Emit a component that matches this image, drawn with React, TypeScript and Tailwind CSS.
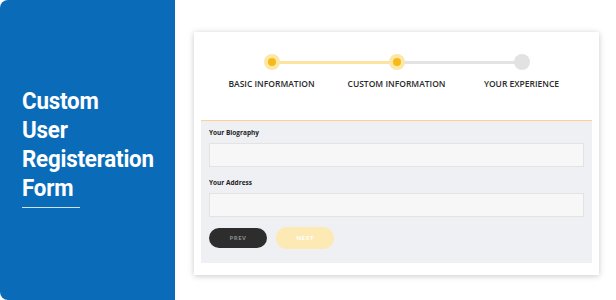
import React from "react";

export default function App() {
  const steps = [
    { label: "BASIC INFORMATION", state: "done" },
    { label: "CUSTOM INFORMATION", state: "done" },
    { label: "YOUR EXPERIENCE", state: "todo" },
  ];
  return (
    <div className="w-[616px] h-[300px] bg-white flex overflow-hidden">
      <div className="w-[175px] h-full bg-[#0a6cb9] rounded-l-[8px] flex flex-col justify-center pl-[22px] pb-[6px]">
        <div
          className="text-white font-bold text-[23px] leading-[29px] tracking-[-0.2px]"
          style={{ fontFamily: "Roboto, 'Liberation Sans', sans-serif", transform: "scaleX(0.97)", transformOrigin: "left" }}
        >
          <div>Custom</div>
          <div>User</div>
          <div>Registeration</div>
          <div>Form</div>
        </div>
        <div className="w-[58px] h-px bg-white/80 mt-[4px]" />
      </div>
      <div className="flex-1 pl-[19px] pr-[17px] pt-[32px]">
        <div className="bg-white shadow-[0_1px_6px_rgba(0,0,0,0.22)] px-[7px] pb-[12px]">
          <div className="h-[88px] flex justify-center pt-[22px]">
            <div className="relative w-[375px] flex">
              <div className="absolute left-[62px] top-[7px] w-[125px] h-[3px] bg-[#fbe3a0]" />
              <div className="absolute left-[187px] top-[7px] w-[125px] h-[3px] bg-[#e3e3e3]" />
              {steps.map((s) => (
                <div key={s.label} className="relative w-[125px] flex flex-col items-center">
                  {s.state === "done" ? (
                    <div className="w-[16px] h-[16px] rounded-full bg-[#fce7a6] flex items-center justify-center">
                      <div className="w-[8px] h-[8px] rounded-full bg-[#f7b91a]" />
                    </div>
                  ) : (
                    <div className="w-[16px] h-[16px] rounded-full bg-[#e2e2e2]" />
                  )}
                  <div
                    className="mt-[8px] text-[8.5px] text-[#2a2a2a] whitespace-nowrap font-semibold"
                    style={{ fontFamily: "'Open Sans', sans-serif" }}
                  >
                    {s.label}
                  </div>
                </div>
              ))}
            </div>
          </div>
          <div
            className="bg-[#eff0f3] border-t border-[#fbd38c] px-[8px] pt-[7px] pb-[14px]"
            style={{ fontFamily: "'Open Sans', sans-serif" }}
          >
            <div className="text-[6.5px] font-bold text-[#222] leading-[10px]">Your Biography</div>
            <div className="mt-[5px] h-[24px] bg-[#f7f7f7] border border-[#e3e3e3]" />
            <div className="mt-[11px] text-[6.5px] font-bold text-[#222] leading-[10px]">Your Address</div>
            <div className="mt-[5px] h-[24px] bg-[#f7f7f7] border border-[#e3e3e3]" />
            <div className="mt-[10px] flex items-center gap-[9px]">
              <div className="w-[58px] h-[20px] rounded-full bg-[#2d2d2d] flex items-center justify-center text-[6px] font-bold text-[#8a8a8a] tracking-[0.5px]">
                PREV
              </div>
              <div className="w-[58px] h-[22px] rounded-full bg-[#fce9b3] flex items-center justify-center text-[6px] font-bold text-white tracking-[0.5px]">
                NEXT
              </div>
            </div>
          </div>
        </div>
      </div>
    </div>
  );
}
